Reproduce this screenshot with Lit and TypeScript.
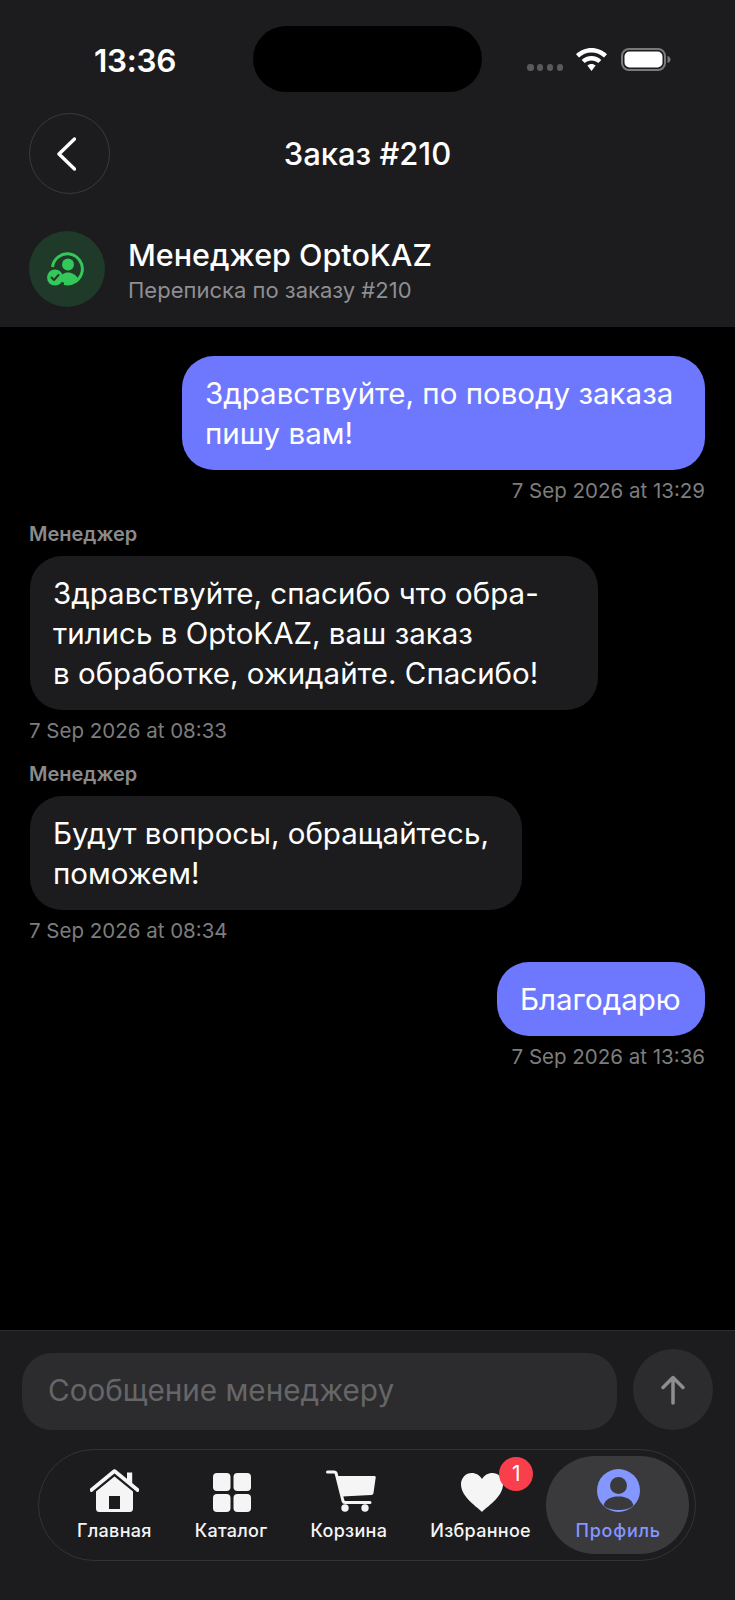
import { LitElement, html, css, svg } from "lit";
import { customElement } from "lit/decorators.js";

type Msg = { mine: boolean; lines: string[]; width: number; time: string };

const MSGS: Msg[] = [
  { mine: true, lines: ["Здравствуйте, по поводу заказа", "пишу вам!"], width: 523, time: "7 Sep 2026 at 13:29" },
  { mine: false, lines: ["Здравствуйте, спасибо что обра-", "тились в OptoKAZ, ваш заказ", "в обработке, ожидайте. Спасибо!"], width: 568, time: "7 Sep 2026 at 08:33" },
  { mine: false, lines: ["Будут вопросы, обращайтесь,", "поможем!"], width: 492, time: "7 Sep 2026 at 08:34" },
  { mine: true, lines: ["Благодарю"], width: 208, time: "7 Sep 2026 at 13:36" },
];

const homeIcon = svg`<svg width="49" height="43" viewBox="0 0 49 43">
  <path d="M37 3.5h5.2V15H37z" fill="#f5f5f5"/>
  <path d="M1.4 21 24.5 2 47.6 21" fill="none" stroke="#f5f5f5" stroke-width="3.6" stroke-linecap="round" stroke-linejoin="round"/>
  <path fill-rule="evenodd" fill="#f5f5f5" d="M24.5 7.5 43 22.5V39.5a3.5 3.5 0 0 1-3.5 3.5h-30A3.5 3.5 0 0 1 6 39.5V22.5ZM19 27v13h11V27Z"/>
</svg>`;

const gridIcon = svg`<svg class="nudge" width="38" height="39" viewBox="0 0 38 39" fill="#f5f5f5">
  <rect x="0" y="0" width="17.5" height="18" rx="4"/><rect x="20.5" y="0" width="17.5" height="18" rx="4"/>
  <rect x="0" y="21" width="17.5" height="18" rx="4"/><rect x="20.5" y="21" width="17.5" height="18" rx="4"/>
</svg>`;

const cartIcon = svg`<svg class="nudge-2" width="50" height="42" viewBox="0 0 50 42">
  <path d="M1.5 2H8c1.200 0 1.900.6 2.200 1.700L17 31c.3 1 .9 1.500 2 1.500H44" fill="none" stroke="#f5f5f5" stroke-width="3" stroke-linecap="round" stroke-linejoin="round"/>
  <path d="M11.500 6H48.500c.8 0 1.300.6 1.200 1.400L47.500 23c-.2 1.200-1 1.900-2.200 1.900L16.300 26.600Z" fill="#f5f5f5"/>
  <circle cx="19" cy="38" r="3.700" fill="#f5f5f5"/><circle cx="39" cy="38" r="3.700" fill="#f5f5f5"/>
</svg>`;

const heartIcon = svg`<svg class="nudge" width="42" height="39" viewBox="0 0 42 39">
  <path fill="#f5f5f5" d="M21 39C17 34.500 0 24 0 11.500 0 4.800 4.800 0 10.800 0 15 0 18.800 2.300 21 6 23.200 2.300 27 0 31.200 0 37.200 0 42 4.800 42 11.500 42 24 25 34.500 21 39Z"/>
</svg>`;

const profileIcon = svg`<svg width="43" height="43" viewBox="0 0 43 43">
  <circle cx="21.500" cy="21.500" r="21.500" fill="#8496ff"/>
  <circle cx="21.500" cy="16.500" r="8.500" fill="#3a3a3c"/>
  <path d="M6.500 36.500C8.500 30 14 27.500 21.500 27.500S34.500 30 36.500 36.500C32.500 40 27.500 41 21.500 41S10.500 40 6.500 36.500Z" fill="#3a3a3c"/>
</svg>`;

const NAV = [
  { label: "Главная", icon: homeIcon },
  { label: "Каталог", icon: gridIcon },
  { label: "Корзина", icon: cartIcon },
  { label: "Избранное", icon: heartIcon, badge: "1" },
  { label: "Профиль", icon: profileIcon, active: true },
];

@customElement("app-root")
export class AppRoot extends LitElement {
  static styles = css`
    :host {
      display: flex;
      flex-direction: column;
      width: 735px;
      height: 1600px;
      background: #000;
      color: #fff;
      font-family: Inter, "Noto Sans", "Liberation Sans", sans-serif;
      overflow: hidden;
    }
    .top {
      background: #1c1c1e;
      height: 327px;
      flex: none;
      box-sizing: border-box;
      padding: 0 29px;
      display: flex;
      flex-direction: column;
    }
    .status {
      height: 113px;
      flex: none;
      display: flex;
      align-items: flex-start;
    }
    .clock {
      margin: 43px 0 0 65px;
      width: 82px;
      font-size: 31.500px;
      line-height: 36px;
      font-weight: 600;
      white-space: nowrap;
      letter-spacing: -0.3px;
    }
    .island {
      margin: 26px 0 0 77px;
      width: 229px;
      height: 66px;
      border-radius: 33px;
      background: #000;
    }
    .dots {
      margin: 64px 0 0 45px;
      display: flex;
      gap: 3.400px;
    }
    .dots i {
      width: 6.500px;
      height: 6.500px;
      border-radius: 50%;
      background: #5a5a5c;
    }
    .wifi { margin: 48px 0 0 13px; }
    .battery { margin: 48px 0 0 14px; }
    .titlebar {
      height: 81px;
      flex: none;
      display: flex;
      align-items: center;
    }
    .back {
      width: 81px;
      height: 81px;
      box-sizing: border-box;
      border: 1px solid #3a3a3c;
      border-radius: 50%;
      display: flex;
      align-items: center;
      justify-content: center;
      flex: none;
    }
    .back svg { margin-right: 7px; }
    .title {
      flex: 1;
      text-align: center;
      font-size: 31px;
      line-height: 36px;
      font-weight: 550;
      margin-left: -81px;
    }
    .person {
      margin-top: 37px;
      display: flex;
      align-items: center;
      gap: 23px;
    }
    .avatar {
      width: 76px;
      height: 76px;
      border-radius: 50%;
      background: #1f3a28;
      flex: none;
      display: flex;
      align-items: center;
      justify-content: center;
    }
    .info { padding-top: 2px; }
    .pname {
      font-size: 30.500px;
      line-height: 36px;
      font-weight: 550;
    }
    .psub {
      font-size: 22px;
      line-height: 26px;
      margin-top: 4px;
      color: #8e8e93;
    }
    .chat {
      flex: 1;
      min-height: 0;
      padding: 29px 30px 0;
      display: flex;
      flex-direction: column;
    }
    .msg { display: flex; flex-direction: column; align-items: flex-start; }
    .msg.mine { align-items: flex-end; }
    .gap { margin-top: 19px; }
    .who {
      font-size: 20px;
      line-height: 24px;
      font-weight: 600;
      color: #8a8a8a;
      margin-bottom: 10px;
      margin-left: -1px;
    }
    .bubble {
      box-sizing: border-box;
      padding: 17px 23px;
      border-radius: 32px;
      background: #1c1c1e;
      font-size: 29.500px;
      line-height: 40px;
      white-space: nowrap;
    }
    .mine .bubble { background: #6e78ff; }
    .time {
      font-size: 20.500px;
      line-height: 24px;
      color: #7d7d7d;
      margin-top: 9px;
    }
    .msg:not(.mine) .time { margin-left: -1px; }
    .bottom {
      flex: none;
      height: 270px;
      box-sizing: border-box;
      background: #1c1c1e;
      border-top: 1px solid #2c2c2e;
      display: flex;
      flex-direction: column;
    }
    .composer {
      display: flex;
      align-items: flex-end;
      padding: 18px 22px 0;
      gap: 16px;
    }
    .input {
      flex: 1;
      height: 77px;
      box-sizing: border-box;
      padding: 0 26px 3px;
      border-radius: 30px;
      background: #2c2c2e;
      color: #666668;
      font-size: 29.700px;
      display: flex;
      align-items: center;
    }
    .send {
      width: 80px;
      height: 81px;
      border-radius: 50%;
      background: #2c2c2e;
      display: flex;
      align-items: center;
      justify-content: center;
      flex: none;
    }
    .nav {
      margin: 19px 39px 0 38px;
      height: 112px;
      box-sizing: border-box;
      border: 1px solid #333335;
      border-radius: 56px;
      display: flex;
      align-items: center;
      gap: 43px;
      padding: 0 6px 0 38px;
    }
    .item {
      position: relative;
      display: flex;
      flex-direction: column;
      align-items: center;
      justify-content: flex-end;
      height: 98px;
      box-sizing: border-box;
      padding-bottom: 12px;
      font-size: 18px;
      line-height: 22px;
      font-weight: 500;
      white-space: nowrap;
      color: #f5f5f5;
      letter-spacing: 0.3px;
    }
    .ic {
      height: 46px;
      display: flex;
      align-items: flex-end;
      justify-content: center;
      margin-bottom: 8px;
    }
    .nudge { margin-left: 2px; }
    .nudge-2 { margin-left: 4px; }
    .item.active {
      margin-left: -28.500px;
      padding-left: 30px;
      padding-right: 28px;
      border-radius: 49px;
      background: #3a3a3c;
      color: #8496ff;
      letter-spacing: 0.75px;
    }
    .badge {
      position: absolute;
      top: 1px;
      left: 69px;
      width: 34px;
      height: 34px;
      border-radius: 50%;
      background: #fa3f4c;
      color: #fff;
      font-size: 21px;
      font-weight: 400;
      line-height: 34px;
      letter-spacing: 0;
      text-align: center;
    }
  `;

  render() {
    return html`
      <div class="top">
        <div class="status">
          <div class="clock">13:36</div>
          <div class="island"></div>
          <div class="dots"><i></i><i></i><i></i><i></i></div>
          <svg class="wifi" width="31" height="23" viewBox="0 0 31 23" fill="#fff">
            <path d="M15.500 0C21.500 0 26.800 2.400 31 6.200L28 9.500C24.600 6.400 20.300 4.500 15.500 4.500S6.400 6.400 3 9.500L0 6.200C4.200 2.400 9.500 0 15.500 0Z"/>
            <path d="M15.500 8C19.300 8 22.700 9.500 25.300 11.900L22.300 15.100C20.500 13.400 18.100 12.400 15.500 12.400S10.500 13.400 8.700 15.100L5.700 11.900C8.300 9.500 11.700 8 15.500 8Z"/>
            <path d="M15.500 16C17.100 16 18.500 16.600 19.600 17.600L15.500 23 11.400 17.600C12.500 16.600 13.900 16 15.500 16Z"/>
          </svg>
          <svg class="battery" width="50" height="23" viewBox="0 0 50 23">
            <rect x="1" y="1" width="43" height="21" rx="7" fill="none" stroke="#7a7a7c" stroke-width="2"/>
            <rect x="3.500" y="3.500" width="38" height="16" rx="5" fill="#fff"/>
            <path d="M46.500 8c2 .5 3 2 3 3.500s-1 3-3 3.500Z" fill="#7a7a7c"/>
          </svg>
        </div>
        <div class="titlebar">
          <div class="back">
            <svg width="20.500" height="34" viewBox="0 0 20.500 34" fill="none" stroke="#fff" stroke-width="3.400" stroke-linecap="round" stroke-linejoin="round"><path d="M18.500 2 3 17l15.500 15"/></svg>
          </div>
          <div class="title">Заказ #210</div>
        </div>
        <div class="person">
          <div class="avatar">
            <svg width="40" height="36" viewBox="0 0 40 36">
              <path d="M5.500 16A15 15 0 1 1 17 32.500" fill="none" stroke="#34c759" stroke-width="3"/>
              <circle cx="21" cy="13.500" r="6" fill="#34c759"/>
              <path d="M12 30c1-6 5-8.500 9-8.500s8 2.500 10 6c-3 3-6.500 5-10 5-2 0-5-1-9-2.500Z" fill="#34c759"/>
              <circle cx="8" cy="26.500" r="8" fill="#34c759"/>
              <path d="M4.500 26.500 7 29l4.500-5" fill="none" stroke="#1f3a28" stroke-width="2" stroke-linecap="round" stroke-linejoin="round"/>
            </svg>
          </div>
          <div class="info">
            <div class="pname">Менеджер OptoKAZ</div>
            <div class="psub">Переписка по заказу #210</div>
          </div>
        </div>
      </div>
      <div class="chat">
        ${MSGS.map((m, i) => html`
          <div class="msg ${m.mine ? "mine" : ""} ${i ? "gap" : ""}">
            ${m.mine ? "" : html`<div class="who">Менеджер</div>`}
            <div class="bubble" style="width:${m.width}px">${m.lines.map((l, j) => html`${j ? html`<br />` : ""}${l}`)}</div>
            <div class="time">${m.time}</div>
          </div>
        `)}
      </div>
      <div class="bottom">
        <div class="composer">
          <div class="input">Сообщение менеджеру</div>
          <div class="send">
            <svg width="26" height="30" viewBox="0 0 26 30" fill="none" stroke="#8e8e8e" stroke-width="3.500" stroke-linecap="round" stroke-linejoin="round"><path d="M13 28V2.500M3 12.500 13 2.500l10 10"/></svg>
          </div>
        </div>
        <div class="nav">
          ${NAV.map((n) => html`
            <div class="item ${n.active ? "active" : ""}">
              <div class="ic">${n.icon}</div>
              ${n.label}
              ${n.badge ? html`<div class="badge">${n.badge}</div>` : ""}
            </div>
          `)}
        </div>
      </div>
    `;
  }
}
